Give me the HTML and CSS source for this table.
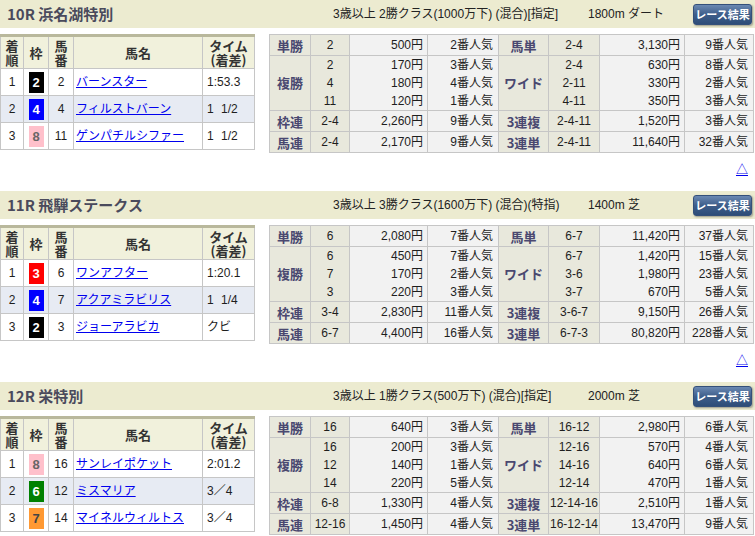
FILE: index.html
```html
<!DOCTYPE html>
<html lang="ja">
<head>
<meta charset="utf-8">
<title>レース結果</title>
<link rel="stylesheet" href="styles.css">
</head>
<body>

<section class="race">
  <div class="race-head">
    <h2 class="race-title">10R 浜名湖特別</h2>
    <span class="race-cond">3歳以上 2勝クラス(1000万下) (混合)[指定]</span>
    <span class="race-dist">1800m ダート</span>
    <button class="btn">レース結果</button>
  </div>
  <div class="race-body">
    <table class="result">
      <colgroup><col class="c-rank"><col class="c-waku"><col class="c-num"><col class="c-name"><col class="c-time"></colgroup>
      <thead><tr><th>着<br>順</th><th>枠</th><th>馬<br>番</th><th>馬名</th><th>タイム<br>(着差)</th></tr></thead>
      <tbody>
        <tr><td class="ctr">1</td><td class="ctr"><span class="waku w2">2</span></td><td class="ctr">2</td><td class="name"><a href="#">バーンスター</a></td><td class="time">1:53.3</td></tr>
        <tr class="alt"><td class="ctr">2</td><td class="ctr"><span class="waku w4">4</span></td><td class="ctr">4</td><td class="name"><a href="#">フィルストバーン</a></td><td class="time">1 1/2</td></tr>
        <tr><td class="ctr">3</td><td class="ctr"><span class="waku w8">8</span></td><td class="ctr">11</td><td class="name"><a href="#">ゲンパチルシファー</a></td><td class="time">1 1/2</td></tr>
      </tbody>
    </table>
    <table class="pay">
      <colgroup><col class="p1"><col class="p2"><col class="p3"><col class="p4"><col class="p5"><col class="p6"><col class="p7"><col class="p8"></colgroup>
      <tbody>
        <tr class="one"><th>単勝</th><td class="cmb">2</td><td class="amt">500円</td><td class="pop">2番人気</td><th>馬単</th><td class="cmb">2-4</td><td class="amt">3,130円</td><td class="pop">9番人気</td></tr>
        <tr class="multi"><th>複勝</th><td class="cmb">2<br>4<br>11</td><td class="amt">170円<br>180円<br>120円</td><td class="pop">3番人気<br>4番人気<br>1番人気</td><th>ワイド</th><td class="cmb">2-4<br>2-11<br>4-11</td><td class="amt">630円<br>330円<br>350円</td><td class="pop">8番人気<br>2番人気<br>3番人気</td></tr>
        <tr class="one"><th>枠連</th><td class="cmb">2-4</td><td class="amt">2,260円</td><td class="pop">9番人気</td><th>3連複</th><td class="cmb">2-4-11</td><td class="amt">1,520円</td><td class="pop">3番人気</td></tr>
        <tr class="one"><th>馬連</th><td class="cmb">2-4</td><td class="amt">2,170円</td><td class="pop">9番人気</td><th>3連単</th><td class="cmb">2-4-11</td><td class="amt">11,640円</td><td class="pop">32番人気</td></tr>
      </tbody>
    </table>
  </div>
  <div class="backtop"><a href="#">△</a></div>
</section>

<section class="race">
  <div class="race-head">
    <h2 class="race-title">11R 飛騨ステークス</h2>
    <span class="race-cond">3歳以上 3勝クラス(1600万下) (混合)(特指)</span>
    <span class="race-dist">1400m 芝</span>
    <button class="btn">レース結果</button>
  </div>
  <div class="race-body">
    <table class="result">
      <colgroup><col class="c-rank"><col class="c-waku"><col class="c-num"><col class="c-name"><col class="c-time"></colgroup>
      <thead><tr><th>着<br>順</th><th>枠</th><th>馬<br>番</th><th>馬名</th><th>タイム<br>(着差)</th></tr></thead>
      <tbody>
        <tr><td class="ctr">1</td><td class="ctr"><span class="waku w3">3</span></td><td class="ctr">6</td><td class="name"><a href="#">ワンアフター</a></td><td class="time">1:20.1</td></tr>
        <tr class="alt"><td class="ctr">2</td><td class="ctr"><span class="waku w4">4</span></td><td class="ctr">7</td><td class="name"><a href="#">アクアミラビリス</a></td><td class="time">1 1/4</td></tr>
        <tr><td class="ctr">3</td><td class="ctr"><span class="waku w2">2</span></td><td class="ctr">3</td><td class="name"><a href="#">ジョーアラビカ</a></td><td class="time">クビ</td></tr>
      </tbody>
    </table>
    <table class="pay">
      <colgroup><col class="p1"><col class="p2"><col class="p3"><col class="p4"><col class="p5"><col class="p6"><col class="p7"><col class="p8"></colgroup>
      <tbody>
        <tr class="one"><th>単勝</th><td class="cmb">6</td><td class="amt">2,080円</td><td class="pop">7番人気</td><th>馬単</th><td class="cmb">6-7</td><td class="amt">11,420円</td><td class="pop">37番人気</td></tr>
        <tr class="multi"><th>複勝</th><td class="cmb">6<br>7<br>3</td><td class="amt">450円<br>170円<br>220円</td><td class="pop">7番人気<br>2番人気<br>3番人気</td><th>ワイド</th><td class="cmb">6-7<br>3-6<br>3-7</td><td class="amt">1,420円<br>1,980円<br>670円</td><td class="pop">15番人気<br>23番人気<br>5番人気</td></tr>
        <tr class="one"><th>枠連</th><td class="cmb">3-4</td><td class="amt">2,830円</td><td class="pop">11番人気</td><th>3連複</th><td class="cmb">3-6-7</td><td class="amt">9,150円</td><td class="pop">26番人気</td></tr>
        <tr class="one"><th>馬連</th><td class="cmb">6-7</td><td class="amt">4,400円</td><td class="pop">16番人気</td><th>3連単</th><td class="cmb">6-7-3</td><td class="amt">80,820円</td><td class="pop">228番人気</td></tr>
      </tbody>
    </table>
  </div>
  <div class="backtop"><a href="#">△</a></div>
</section>

<section class="race">
  <div class="race-head">
    <h2 class="race-title">12R 栄特別</h2>
    <span class="race-cond">3歳以上 1勝クラス(500万下) (混合)[指定]</span>
    <span class="race-dist">2000m 芝</span>
    <button class="btn">レース結果</button>
  </div>
  <div class="race-body">
    <table class="result">
      <colgroup><col class="c-rank"><col class="c-waku"><col class="c-num"><col class="c-name"><col class="c-time"></colgroup>
      <thead><tr><th>着<br>順</th><th>枠</th><th>馬<br>番</th><th>馬名</th><th>タイム<br>(着差)</th></tr></thead>
      <tbody>
        <tr><td class="ctr">1</td><td class="ctr"><span class="waku w8">8</span></td><td class="ctr">16</td><td class="name"><a href="#">サンレイポケット</a></td><td class="time">2:01.2</td></tr>
        <tr class="alt"><td class="ctr">2</td><td class="ctr"><span class="waku w6">6</span></td><td class="ctr">12</td><td class="name"><a href="#">ミスマリア</a></td><td class="time">3／4</td></tr>
        <tr><td class="ctr">3</td><td class="ctr"><span class="waku w7">7</span></td><td class="ctr">14</td><td class="name"><a href="#">マイネルウィルトス</a></td><td class="time">3／4</td></tr>
      </tbody>
    </table>
    <table class="pay">
      <colgroup><col class="p1"><col class="p2"><col class="p3"><col class="p4"><col class="p5"><col class="p6"><col class="p7"><col class="p8"></colgroup>
      <tbody>
        <tr class="one"><th>単勝</th><td class="cmb">16</td><td class="amt">640円</td><td class="pop">3番人気</td><th>馬単</th><td class="cmb">16-12</td><td class="amt">2,980円</td><td class="pop">6番人気</td></tr>
        <tr class="multi"><th>複勝</th><td class="cmb">16<br>12<br>14</td><td class="amt">200円<br>140円<br>220円</td><td class="pop">3番人気<br>1番人気<br>5番人気</td><th>ワイド</th><td class="cmb">12-16<br>14-16<br>12-14</td><td class="amt">570円<br>640円<br>470円</td><td class="pop">4番人気<br>6番人気<br>1番人気</td></tr>
        <tr class="one"><th>枠連</th><td class="cmb">6-8</td><td class="amt">1,330円</td><td class="pop">4番人気</td><th>3連複</th><td class="cmb">12-14-16</td><td class="amt">2,510円</td><td class="pop">1番人気</td></tr>
        <tr class="one"><th>馬連</th><td class="cmb">12-16</td><td class="amt">1,450円</td><td class="pop">4番人気</td><th>3連単</th><td class="cmb">16-12-14</td><td class="amt">13,470円</td><td class="pop">9番人気</td></tr>
      </tbody>
    </table>
  </div>
  <div class="backtop"><a href="#">△</a></div>
</section>

</body>
</html>
```

FILE: styles.css
```css
* { box-sizing: border-box; }

body {
  margin: 0;
  width: 755px;
  background: #ffffff;
  color: #1e1e1e;
  font-family: "Liberation Sans", "Noto Sans CJK JP", sans-serif;
  font-size: 12px;
}

.race-head {
  display: flex;
  align-items: center;
  height: 28px;
  background: #ecebd0;
}

.race-title {
  margin: 0;
  width: 333px;
  padding-left: 7px;
  font-family: "Noto Sans CJK JP", sans-serif;
  font-size: 15px;
  font-weight: bold;
  color: #4a4a5c;
  line-height: 22px;
}

.race-cond {
  width: 255px;
  color: #222;
  line-height: 18px;
}

.race-dist {
  flex: 1;
  color: #222;
  line-height: 18px;
}

.btn {
  width: 59px;
  height: 21px;
  margin-right: 3px;
  padding: 0;
  border: 1px solid #34507a;
  border-radius: 3px;
  background: linear-gradient(#6a88b2, #3e5e8a 50%, #2e4d78);
  box-shadow: 1px 1px 2px rgba(0,0,0,0.35);
  color: #ffffff;
  font-family: "Noto Sans CJK JP", sans-serif;
  font-size: 11px;
  font-weight: bold;
  line-height: 16px;
  white-space: nowrap;
}

.race-body {
  display: flex;
  align-items: flex-start;
  gap: 14px;
  margin-top: 6px;
}

table {
  border-collapse: collapse;
  table-layout: fixed;
  flex: none;
}

/* result table */
.result {
  width: 254px;
  border-top: 3px solid #b9b89c;
}

.c-rank { width: 23px; }
.c-waku { width: 25px; }
.c-num { width: 25px; }
.c-name { width: 129px; }
.c-time { width: 52px; }

.result th {
  height: 33px;
  padding: 0;
  border: 1px solid #c6c6c6;
  border-top: 0;
  background: #f1f1dc;
  color: #333;
  font-family: "Noto Sans CJK JP", sans-serif;
  font-size: 13px;
  font-weight: bold;
  line-height: 14px;
  text-align: center;
}

.result td {
  height: 27px;
  padding: 0;
  border: 1px solid #c6c6c6;
  background: #ffffff;
  line-height: 18px;
}

.result tr.alt td { background: #e7ebf3; }

.ctr { text-align: center; }

.name { padding-left: 2px !important; }
.name a {
  color: #0000ee;
  text-decoration: underline;
}

.time {
  padding-left: 4px !important;
  word-spacing: 4px;
}

.waku {
  display: inline-block;
  width: 15px;
  height: 21px;
  line-height: 21px;
  text-align: center;
  font-weight: bold;
  font-size: 13px;
  vertical-align: middle;
}
.w2 { background: #000000; color: #ffffff; }
.w3 { background: #ff0000; color: #ffffff; }
.w4 { background: #0000ff; color: #ffffff; }
.w6 { background: #008000; color: #ffffff; }
.w7 { background: #ff9933; color: #444; }
.w8 { background: #ffc0cb; color: #666; }

/* payout table */
.pay {
  width: 484px;
}

.p1 { width: 41px; }
.p2 { width: 39px; }
.p3 { width: 78px; }
.p4 { width: 71px; }
.p5 { width: 50px; }
.p6 { width: 51px; }
.p7 { width: 85px; }
.p8 { width: 69px; }

.pay th, .pay td {
  padding: 0 3px;
  border: 1px solid #c6c6c6;
  white-space: nowrap;
}

.pay th {
  background: #e8e8dc;
  color: #4a4870;
  font-family: "Noto Sans CJK JP", sans-serif;
  font-size: 13px;
  font-weight: bold;
  text-align: center;
}

.pay .cmb {
  padding: 0;
  background: #e8e8dc;
  text-align: center;
}

.pay .amt, .pay .pop {
  background: #f2f2f2;
  text-align: right;
}

.pay .amt { padding-right: 4px; }
.pay .pop { padding-right: 5px; }

.pay tr.one th, .pay tr.one td {
  height: 21px;
  line-height: 19px;
}

.pay tr.multi th, .pay tr.multi td {
  height: 54px;
  line-height: 18px;
}

.backtop {
  height: 38px;
  padding: 7px 7px 0 0;
  text-align: right;
  line-height: 18px;
}

.backtop a {
  color: #0000ee;
  font-family: "Noto Sans CJK JP", sans-serif;
  font-size: 12px;
  text-decoration: underline;
}
```
